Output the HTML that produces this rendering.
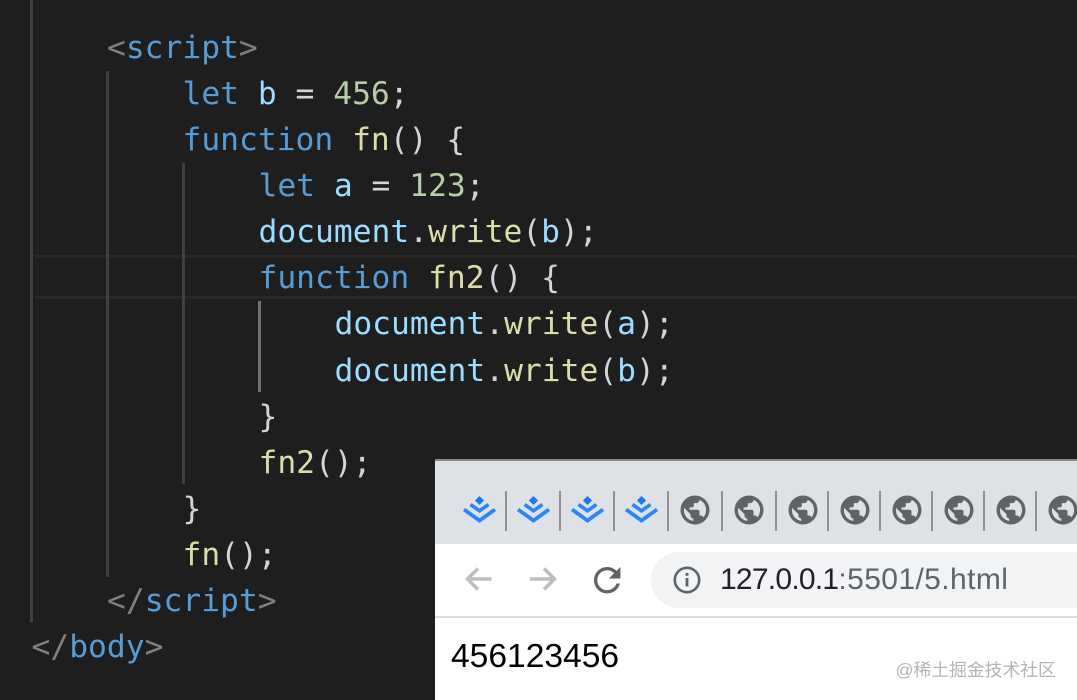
<!DOCTYPE html>
<html lang="zh">
<head>
<meta charset="utf-8">
<style>
html,body{margin:0;padding:0;}
body{width:1077px;height:700px;overflow:hidden;background:#1e1e1e;position:relative;}
.l{position:absolute;white-space:pre;font-family:"DejaVu Sans Mono",monospace;font-size:31.3px;line-height:46px;height:46px;color:#d4d4d4;}
.g{position:absolute;width:3px;background:#404040;}
.t{color:#808080}.k{color:#569cd6}.v{color:#9cdcfe}.f{color:#dcdcaa}.n{color:#b5cea8}
.abs{position:absolute;}
</style>
</head>
<body>
<div class="abs" style="left:35px;top:255px;width:1042px;height:3px;background:#282828"></div>
<div class="abs" style="left:35px;top:296px;width:1042px;height:3px;background:#282828"></div>
<div class="g" style="left:30px;top:0;height:622px"></div>
<div class="g" style="left:106px;top:71px;height:506px"></div>
<div class="g" style="left:182px;top:163px;height:321px"></div>
<div class="g" style="left:258px;top:301px;height:91px;background:#707070"></div>

<div class="l" style="left:107px;top:25px"><span class="t">&lt;</span><span class="k">script</span><span class="t">&gt;</span></div>
<div class="l" style="left:182.5px;top:71px"><span class="k">let</span> <span class="v">b</span> = <span class="n">456</span>;</div>
<div class="l" style="left:182.5px;top:117px"><span class="k">function</span> <span class="f">fn</span>() {</div>
<div class="l" style="left:258.5px;top:163px"><span class="k">let</span> <span class="v">a</span> = <span class="n">123</span>;</div>
<div class="l" style="left:258.5px;top:209px"><span class="v">document</span>.<span class="f">write</span>(<span class="v">b</span>);</div>
<div class="l" style="left:258.5px;top:255px"><span class="k">function</span> <span class="f">fn2</span>() {</div>
<div class="l" style="left:334.5px;top:301px"><span class="v">document</span>.<span class="f">write</span>(<span class="v">a</span>);</div>
<div class="l" style="left:334.5px;top:348px"><span class="v">document</span>.<span class="f">write</span>(<span class="v">b</span>);</div>
<div class="l" style="left:258.5px;top:394px">}</div>
<div class="l" style="left:258.5px;top:440px"><span class="f">fn2</span>();</div>
<div class="l" style="left:182.5px;top:486px">}</div>
<div class="l" style="left:182.5px;top:532px"><span class="f">fn</span>();</div>
<div class="l" style="left:107px;top:578px"><span class="t">&lt;/</span><span class="k">script</span><span class="t">&gt;</span></div>
<div class="l" style="left:31.5px;top:624px"><span class="t">&lt;/</span><span class="k">body</span><span class="t">&gt;</span></div>

<!-- browser -->
<div class="abs" style="left:435px;top:459px;width:642px;height:241px;background:#fff">
  <div class="abs" style="left:0;top:0;width:642px;height:2px;background:#8a8c8f"></div>
  <div class="abs" style="left:0;top:2px;width:642px;height:83px;background:#dee1e6"></div>
  <div class="abs" style="left:216px;top:93px;width:426px;height:56px;background:#f1f3f4;border-radius:28px 0 0 28px"></div>
  <div class="abs" style="left:0;top:157px;width:642px;height:2px;background:#dadce0"></div>
</div>

<svg class="abs" style="left:0;top:0" width="1077" height="700" viewBox="0 0 1077 700">
  <defs>
    <g id="lazy">
      <path d="M0 -14L4.6 -9.5L0 -5L-4.6 -9.5Z" fill="#1a7af0"/>
      <path d="M-9 -5.5L0 0.8L9 -5.5" fill="none" stroke="#2b86f5" stroke-width="3.6"/>
      <path d="M-15.5 -0.5L0 10.5L15.5 -0.5" fill="none" stroke="#2b86f5" stroke-width="3.8"/>
    </g>
    <path id="globe" fill="#5f6368" stroke="#5f6368" stroke-width="0.35" transform="scale(1.42) translate(-12 -12)" d="M12 2C6.48 2 2 6.48 2 12s4.48 10 10 10 10-4.48 10-10S17.52 2 12 2zm-1 17.93c-3.95-.49-7-3.85-7-7.93 0-.62.08-1.21.21-1.79L9 15v1c0 1.1.9 2 2 2v1.93zm6.9-2.54c-.26-.81-1-1.39-1.9-1.39h-1v-3c0-.55-.45-1-1-1H8v-2h2c.55 0 1-.45 1-1V7h2c1.1 0 2-.9 2-2v-.41c2.93 1.19 5 4.06 5 7.41 0 2.08-.8 3.97-2.1 5.39z"/>
  </defs>
  <use href="#lazy" x="479.5" y="510"/>
  <use href="#lazy" x="533.5" y="510"/>
  <use href="#lazy" x="587.5" y="510"/>
  <use href="#lazy" x="641.5" y="510"/>
  <g transform="translate(695 510)"><use href="#globe"/></g>
  <g transform="translate(749 510)"><use href="#globe"/></g>
  <g transform="translate(803 510)"><use href="#globe"/></g>
  <g transform="translate(855 510)"><use href="#globe"/></g>
  <g transform="translate(907 510)"><use href="#globe"/></g>
  <g transform="translate(959 510)"><use href="#globe"/></g>
  <g transform="translate(1011 510)"><use href="#globe"/></g>
  <g transform="translate(1063 510)"><use href="#globe"/></g>
  <g fill="#8e9094">
    <rect x="505" y="491" width="2" height="40"/>
    <rect x="559" y="491" width="2" height="40"/>
    <rect x="613" y="491" width="2" height="40"/>
    <rect x="667" y="491" width="2" height="40"/>
    <rect x="721" y="491" width="2" height="40"/>
    <rect x="775" y="491" width="2" height="40"/>
    <rect x="827" y="491" width="2" height="40"/>
    <rect x="879" y="491" width="2" height="40"/>
    <rect x="931" y="491" width="2" height="40"/>
    <rect x="983" y="491" width="2" height="40"/>
    <rect x="1035" y="491" width="2" height="40"/>
  </g>
  <path d="M491.5 579H468M478 568.5L467.5 579L478 589.5" fill="none" stroke="#bdbdbd" stroke-width="3.5"/>
  <path d="M530 579H554M544 568.5L554.5 579L544 589.5" fill="none" stroke="#bdbdbd" stroke-width="3.5"/>
  <path fill="#5f6368" transform="translate(587.4 560.4) scale(1.65)" d="M17.65 6.35C16.2 4.9 14.21 4 12 4c-4.42 0-7.99 3.58-7.99 8s3.57 8 7.99 8c3.73 0 6.84-2.55 7.73-6h-2.08c-.82 2.33-3.04 4-5.65 4-3.31 0-6-2.69-6-6s2.69-6 6-6c1.66 0 3.14.69 4.22 1.78L13 11h7V4l-2.35 2.35z"/>
  <circle cx="687" cy="580" r="12.2" fill="none" stroke="#5f6368" stroke-width="2.6"/>
  <rect x="685.6" y="578" width="2.8" height="8.5" fill="#5f6368"/>
  <rect x="685.6" y="573" width="2.8" height="2.8" fill="#5f6368"/>
</svg>

<div class="abs" style="left:720px;top:560px;font:30px/40px 'Liberation Sans',sans-serif;white-space:pre;color:#5f6368;letter-spacing:0.4px"><span style="color:#202124;letter-spacing:-0.75px">127.0.0.1</span>:5501/5.html</div>
<div class="abs" style="left:451px;top:637px;font:33.6px/40px 'Liberation Sans',sans-serif;color:#000;white-space:pre">456123456</div>
<div class="abs" style="left:895.5px;top:659px;font:17.8px/22px 'Liberation Sans','Noto Sans CJK SC',sans-serif;color:#b4b4b4;white-space:pre">@稀土掘金技术社区</div>
</body>
</html>
